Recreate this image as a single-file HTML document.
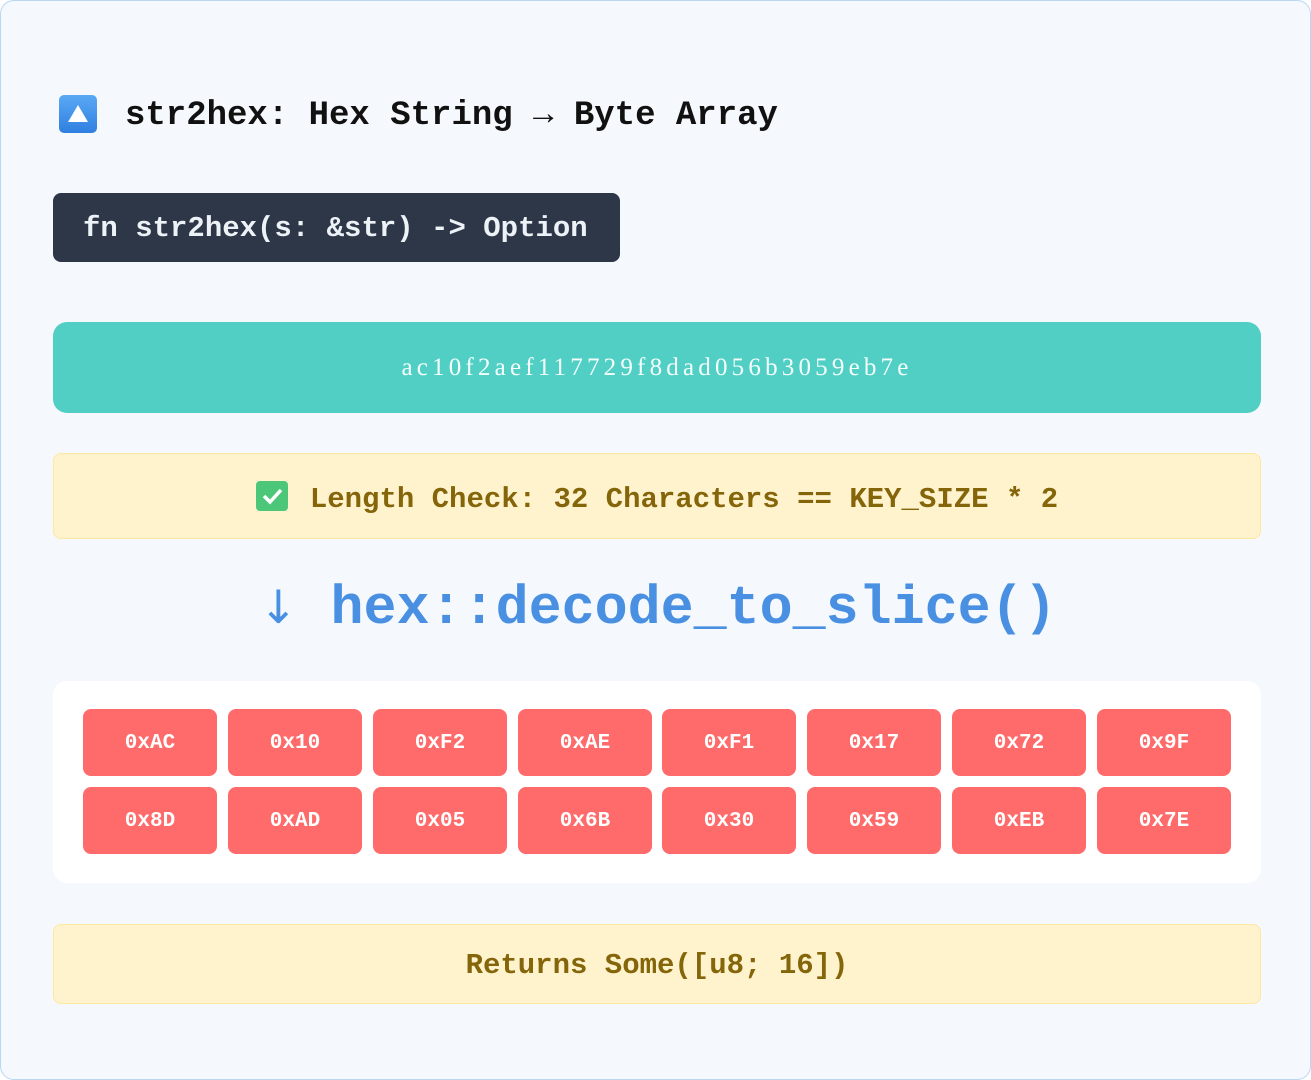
<!DOCTYPE html>
<html><head><meta charset="utf-8"><style>
*{box-sizing:border-box;margin:0;padding:0}
html,body{width:1311px;height:1080px;overflow:hidden;background:#fff}
.page{position:absolute;left:0;top:0;width:1311px;height:1080px;background:#f5f9fd;border:1.5px solid #b9d6f2;border-radius:14px}
.mono{font-family:"Liberation Mono","DejaVu Sans Mono",monospace;font-weight:bold}
.title{position:absolute;left:124px;top:96px;font-size:34px;color:#111;white-space:nowrap}
.icon{position:absolute;left:58px;top:94px;width:38px;height:38px;border-radius:5px;background:linear-gradient(#5aa9f5,#2f7fe0)}
.code{position:absolute;left:52px;top:192px;width:567px;height:69px;background:#2d3748;border-radius:8px;color:#edf2f7;font-size:29px;line-height:71px;padding-left:30px;white-space:nowrap}
.teal{position:absolute;left:52px;top:321px;width:1208px;height:91px;background:#52cfc4;border-radius:14px;color:#f4fffd;font-family:"Liberation Serif",serif;font-size:25px;letter-spacing:4.2px;text-align:center;line-height:91px}
.yel{position:absolute;left:52px;width:1208px;background:#fff3cd;border:1.5px solid #ffe7a0;border-radius:8px;color:#85650a;font-size:29px;text-align:center;white-space:nowrap}
.arrow{position:absolute;left:258px;top:571px;color:#4a90e2;font-size:55px;white-space:nowrap;line-height:70px}
.grid{position:absolute;left:52px;top:680px;width:1208px;height:202px;background:#fff;border-radius:14px}
.cell{position:absolute;width:134px;height:67px;background:#ff6b6b;border-radius:8px;color:#fff;font-size:21px;text-align:center;line-height:70px}
</style></head><body><div class="page">
<div class="icon"><svg width="38" height="38"><polygon points="19,10 29,27 9,27" fill="#fff"/></svg></div>
<div class="title mono">str2hex: Hex String → Byte Array</div>
<div class="code mono">fn str2hex(s: &amp;str) -&gt; Option</div>
<div class="teal">ac10f2aef117729f8dad056b3059eb7e</div>
<div class="yel mono" style="top:452px;height:86px;line-height:92px"><span style="display:inline-block;width:32px;height:30px;background:#4cc77a;border-radius:4px;vertical-align:-4px;margin-right:22px;position:relative"><svg width="32" height="30" style="position:absolute;left:0;top:0"><path d="M8 15 L14 21 L25 9" stroke="#fff" stroke-width="3.5" fill="none"/></svg></span>Length Check: 32 Characters == KEY_SIZE * 2</div>
<div class="arrow mono"><span style="font-weight:normal;font-family:'DejaVu Sans',sans-serif;font-size:46px">↓</span> hex::decode_to_slice()</div>
<div class="grid">
<div class="cell mono" style="left:30px;top:28px">0xAC</div>
<div class="cell mono" style="left:175px;top:28px">0x10</div>
<div class="cell mono" style="left:320px;top:28px">0xF2</div>
<div class="cell mono" style="left:465px;top:28px">0xAE</div>
<div class="cell mono" style="left:609px;top:28px">0xF1</div>
<div class="cell mono" style="left:754px;top:28px">0x17</div>
<div class="cell mono" style="left:899px;top:28px">0x72</div>
<div class="cell mono" style="left:1044px;top:28px">0x9F</div>
<div class="cell mono" style="left:30px;top:106px">0x8D</div>
<div class="cell mono" style="left:175px;top:106px">0xAD</div>
<div class="cell mono" style="left:320px;top:106px">0x05</div>
<div class="cell mono" style="left:465px;top:106px">0x6B</div>
<div class="cell mono" style="left:609px;top:106px">0x30</div>
<div class="cell mono" style="left:754px;top:106px">0x59</div>
<div class="cell mono" style="left:899px;top:106px">0xEB</div>
<div class="cell mono" style="left:1044px;top:106px">0x7E</div>
</div>
<div class="yel mono" style="top:923px;height:80px;line-height:82px">Returns Some([u8; 16])</div>
</div></body></html>
